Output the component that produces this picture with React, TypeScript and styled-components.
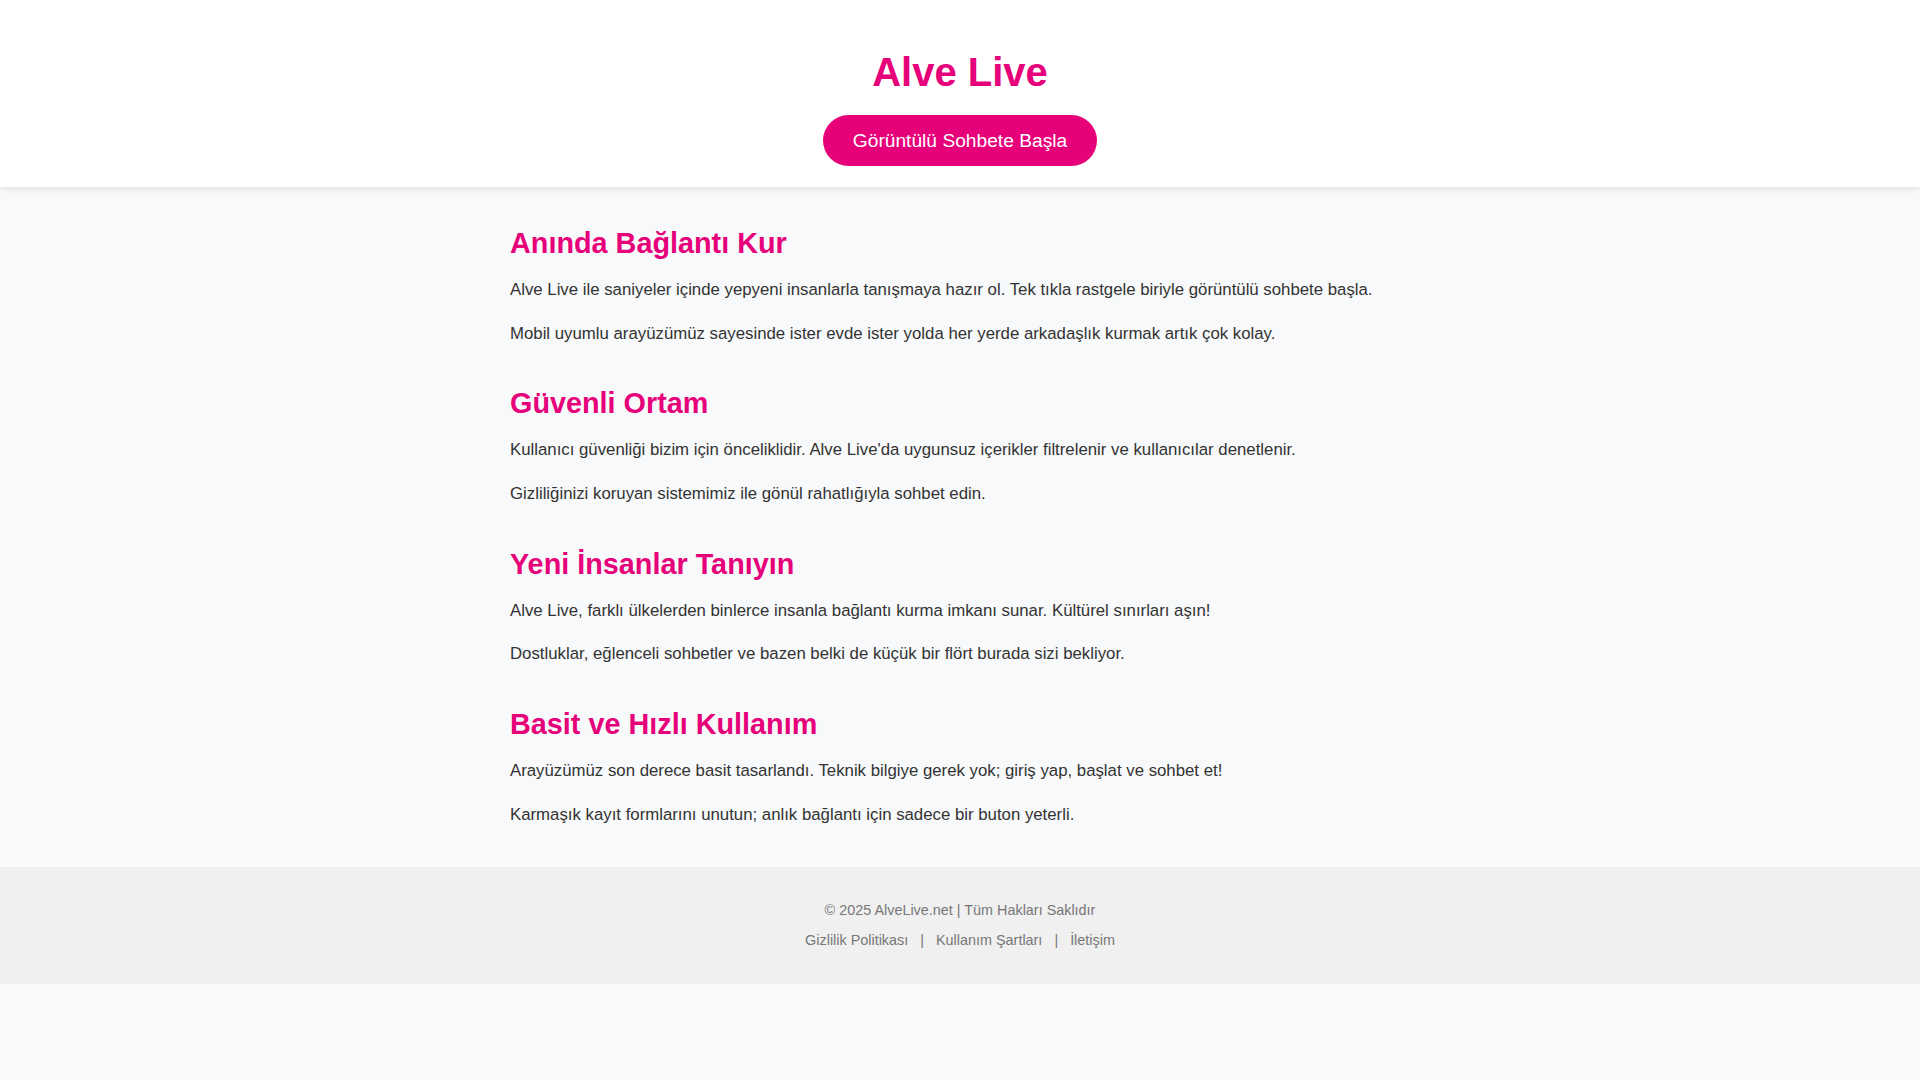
import React from "react";
import styled, { createGlobalStyle } from "styled-components";

const pink = "#e6007a";

const GlobalStyle = createGlobalStyle`
    html, body {
        margin: 0;
        padding: 0;
        background: #f8f9fa;
        font-family: "Liberation Sans", Arial, sans-serif;
        color: #333;
        line-height: 1.6;
    }
`;

const Header = styled.header`
    background: #fff;
    box-shadow: 0 2px 6px rgba(0, 0, 0, 0.1);
    padding: 48px 0 21px;
    display: flex;
    flex-direction: column;
    align-items: center;
    position: relative;
`;

const Logo = styled.h1`
    margin: 0 0 19px;
    font-size: 40px;
    line-height: 48px;
    font-weight: bold;
    color: ${pink};
`;

const StartButton = styled.a`
    display: inline-block;
    background: ${pink};
    color: #fff;
    font-size: 19.2px;
    line-height: 21px;
    padding: 15px 30px;
    border-radius: 30px;
    text-decoration: none;
    cursor: pointer;
`;

const Main = styled.main`
    max-width: 900px;
    margin: 0 auto;
    padding: 33px 0 23px;
    display: flex;
    flex-direction: column;
    gap: 16.9px;
`;

const Section = styled.section`
    display: block;
`;

const Heading = styled.h2`
    margin: 0 0 10px;
    font-size: 28.8px;
    line-height: 1.6;
    font-weight: bold;
    color: ${pink};
`;

const Text = styled.p`
    margin: 0 0 16.4px;
    font-size: 16.8px;
    line-height: 27.3px;
`;

const Footer = styled.footer`
    background: #f0f0f0;
    padding: 32px 0 31px;
    text-align: center;
    font-size: 14.4px;
    color: #777;
`;

const Copy = styled.p`
    margin: 0;
`;

const Links = styled.p`
    margin: 7px 0 0;
`;

const FooterLink = styled.a`
    color: #777;
    text-decoration: none;
`;

const Sep = styled.span`
    margin: 0 12px;
`;

const sections = [
    {
        title: "Anında Bağlantı Kur",
        lines: [
            "Alve Live ile saniyeler içinde yepyeni insanlarla tanışmaya hazır ol. Tek tıkla rastgele biriyle görüntülü sohbete başla.",
            "Mobil uyumlu arayüzümüz sayesinde ister evde ister yolda her yerde arkadaşlık kurmak artık çok kolay.",
        ],
    },
    {
        title: "Güvenli Ortam",
        lines: [
            "Kullanıcı güvenliği bizim için önceliklidir. Alve Live'da uygunsuz içerikler filtrelenir ve kullanıcılar denetlenir.",
            "Gizliliğinizi koruyan sistemimiz ile gönül rahatlığıyla sohbet edin.",
        ],
    },
    {
        title: "Yeni İnsanlar Tanıyın",
        lines: [
            "Alve Live, farklı ülkelerden binlerce insanla bağlantı kurma imkanı sunar. Kültürel sınırları aşın!",
            "Dostluklar, eğlenceli sohbetler ve bazen belki de küçük bir flört burada sizi bekliyor.",
        ],
    },
    {
        title: "Basit ve Hızlı Kullanım",
        lines: [
            "Arayüzümüz son derece basit tasarlandı. Teknik bilgiye gerek yok; giriş yap, başlat ve sohbet et!",
            "Karmaşık kayıt formlarını unutun; anlık bağlantı için sadece bir buton yeterli.",
        ],
    },
];

export default function App() {
    return (
        <>
            <GlobalStyle />
            <Header>
                <Logo>Alve Live</Logo>
                <StartButton href="#">Görüntülü Sohbete Başla</StartButton>
            </Header>
            <Main>
                {sections.map((s) => (
                    <Section key={s.title}>
                        <Heading>{s.title}</Heading>
                        {s.lines.map((l) => (
                            <Text key={l}>{l}</Text>
                        ))}
                    </Section>
                ))}
            </Main>
            <Footer>
                <Copy>© 2025 AlveLive.net | Tüm Hakları Saklıdır</Copy>
                <Links>
                    <FooterLink href="#">Gizlilik Politikası</FooterLink>
                    <Sep>|</Sep>
                    <FooterLink href="#">Kullanım Şartları</FooterLink>
                    <Sep>|</Sep>
                    <FooterLink href="#">İletişim</FooterLink>
                </Links>
            </Footer>
        </>
    );
}
